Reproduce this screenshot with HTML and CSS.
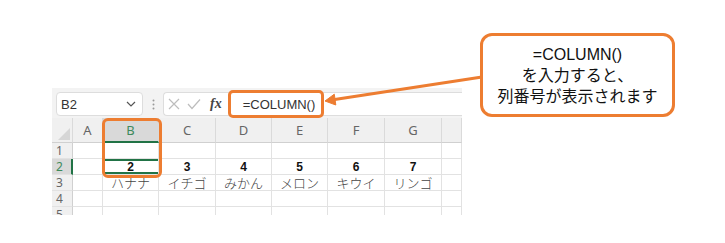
FILE: index.html
```html
<!DOCTYPE html>
<html lang="ja">
<head>
<meta charset="utf-8">
<link rel="stylesheet" href="styles.css">
</head>
<body>
<div class="canvas">
  <div class="sheet">
    <div class="fbar">
      <div class="namebox">
        <span class="ref">B2</span>
        <svg class="chev" width="10" height="6" viewBox="0 0 10 6"><polyline points="1,1 5,5 9,1" fill="none" stroke="#555" stroke-width="1.2"/></svg>
      </div>
      <div class="grip">
        <svg width="3" height="11" viewBox="0 0 3 11"><circle cx="1.5" cy="1.5" r="1" fill="#999"/><circle cx="1.5" cy="5.5" r="1" fill="#999"/><circle cx="1.5" cy="9.5" r="1" fill="#999"/></svg>
      </div>
      <div class="fbox">
        <svg class="ico" width="12" height="12" viewBox="0 0 12 12"><path d="M1 1 L11 11 M11 1 L1 11" stroke="#bdbdbd" stroke-width="1.2" fill="none"/></svg>
        <svg class="ico" width="14" height="12" viewBox="0 0 14 12"><polyline points="1,6 5,10.5 13,1.5" stroke="#bdbdbd" stroke-width="1.2" fill="none"/></svg>
        <span class="fx">fx</span>
        <span class="formula">=COLUMN()</span>
      </div>
    </div>
    <div class="grid">
      <div class="c h corner"><span class="tri"></span></div>
      <div class="c h">A</div>
      <div class="c h sel">B</div>
      <div class="c h">C</div>
      <div class="c h">D</div>
      <div class="c h">E</div>
      <div class="c h">F</div>
      <div class="c h">G</div>
      <div class="c h"></div>

      <div class="c r">1</div>
      <div class="c"></div><div class="c"></div><div class="c"></div><div class="c"></div><div class="c"></div><div class="c"></div><div class="c"></div><div class="c"></div>

      <div class="c r sel">2</div>
      <div class="c"></div>
      <div class="c num active">2</div>
      <div class="c num">3</div>
      <div class="c num">4</div>
      <div class="c num">5</div>
      <div class="c num">6</div>
      <div class="c num">7</div>
      <div class="c"></div>

      <div class="c r">3</div>
      <div class="c"></div>
      <div class="c jp">ハナナ</div>
      <div class="c jp">イチゴ</div>
      <div class="c jp">みかん</div>
      <div class="c jp">メロン</div>
      <div class="c jp">キウイ</div>
      <div class="c jp">リンゴ</div>
      <div class="c"></div>

      <div class="c r">4</div>
      <div class="c"></div><div class="c"></div><div class="c"></div><div class="c"></div><div class="c"></div><div class="c"></div><div class="c"></div><div class="c"></div>

      <div class="c r">5</div>
      <div class="c"></div><div class="c"></div><div class="c"></div><div class="c"></div><div class="c"></div><div class="c"></div><div class="c"></div><div class="c"></div>
    </div>
  </div>

  <div class="hl hl-col"></div>
  <div class="hl hl-formula"></div>

  <svg class="arrow" width="725" height="243" viewBox="0 0 725 243">
    <line x1="482" y1="77" x2="333" y2="99.8" stroke="#ed7d31" stroke-width="3"/>
    <polygon points="325,101 335.8,105 334.3,94.2" fill="#ed7d31" stroke="#ed7d31" stroke-width="1" stroke-linejoin="miter"/>
  </svg>

  <div class="callout">
    <div>=COLUMN()</div>
    <div>を入力すると、</div>
    <div>列番号が表示されます</div>
  </div>
</div>
</body>
</html>
```

FILE: styles.css
```css
html, body {
  margin: 0;
  padding: 0;
  background: #ffffff;
}

body {
  font-family: "Liberation Sans", "Noto Sans CJK JP", sans-serif;
}

.canvas {
  position: relative;
  width: 725px;
  height: 243px;
  overflow: hidden;
}

.sheet {
  margin: 88px 0 0 52px;
  width: 410px;
  height: 127px;
  overflow: hidden;
}

.fbar {
  display: flex;
  align-items: flex-start;
  height: 30px;
  box-sizing: border-box;
  padding: 4px 0 0 4px;
  background: #f3f3f3;
}

.namebox {
  width: 87px;
  height: 24px;
  box-sizing: border-box;
  background: #ffffff;
  border: 1px solid #dddddd;
  border-radius: 4px;
  display: flex;
  align-items: center;
  justify-content: space-between;
  padding: 0 6px 0 4px;
}

.ref {
  font-size: 13px;
  color: #333333;
}

.grip {
  width: 20px;
  height: 24px;
  display: flex;
  align-items: center;
  justify-content: center;
}

.fbox {
  flex: 1;
  height: 24px;
  box-sizing: border-box;
  background: #ffffff;
  border: 1px solid #dddddd;
  border-right: none;
  border-radius: 4px 0 0 4px;
  display: flex;
  align-items: center;
  padding-left: 4px;
  gap: 7px;
}

.fx {
  font-family: "Liberation Serif", "DejaVu Serif", serif;
  font-style: italic;
  font-weight: bold;
  font-size: 14px;
  color: #444444;
  margin-left: 2px;
}

.formula {
  font-size: 13px;
  color: #333333;
  margin-left: 14px;
}

.grid {
  display: grid;
  grid-template-columns: 21px 30px 56px 57px 56px 56px 57px 57px 20px;
  grid-template-rows: 25px repeat(5, 16px);
}

.c {
  box-sizing: border-box;
  border-right: 1px solid #e2e2e2;
  border-bottom: 1px solid #e2e2e2;
  display: flex;
  align-items: center;
  justify-content: center;
  font-size: 12px;
  color: #222222;
  white-space: nowrap;
}

.h {
  background: #f0f0f0;
  color: #666666;
  font-family: "Noto Sans", "Liberation Sans", sans-serif;
  font-size: 13px;
  border-right-color: #dadada;
  border-bottom-color: #d0d0d0;
}

.corner {
  position: relative;
}

.tri {
  position: absolute;
  right: 2px;
  bottom: 2px;
  width: 0;
  height: 0;
  border-left: 12px solid transparent;
  border-bottom: 12px solid #d6d6d6;
}

.h.sel {
  background: #d9d9d9;
  color: #3f8a5c;
  border-bottom: 2px solid #217346;
}

.r {
  background: #f0f0f0;
  color: #666666;
  font-family: "Noto Sans", "Liberation Sans", sans-serif;
  font-size: 12px;
  justify-content: flex-start;
  padding-left: 4px;
  border-right-color: #d0d0d0;
  border-bottom-color: #e2e2e2;
}

.r.sel {
  background: #d9d9d9;
  color: #3f8a5c;
  border-right: 2px solid #217346;
}

.num {
  font-weight: bold;
  font-size: 12px;
  color: #111111;
}

.active {
  box-shadow: inset 0 2px 0 #217346, inset 0 -2px 0 #217346;
}

.jp {
  font-family: "Noto Sans CJK JP", sans-serif;
  font-size: 13px;
  font-weight: 300;
  color: #444444;
  line-height: 15px;
  overflow: visible;
}

.hl {
  position: absolute;
  box-sizing: border-box;
  border: 3px solid #ed7d31;
}

.hl-col {
  left: 102px;
  top: 118px;
  width: 60px;
  height: 60px;
  border-radius: 6px;
}

.hl-formula {
  left: 228px;
  top: 90px;
  width: 96px;
  height: 28px;
  border-radius: 5px;
}

.arrow {
  position: absolute;
  left: 0;
  top: 0;
}

.callout {
  position: absolute;
  left: 480px;
  top: 33px;
  width: 195px;
  height: 84px;
  box-sizing: border-box;
  border: 3px solid #ed7d31;
  border-radius: 12px;
  background: #ffffff;
  display: flex;
  flex-direction: column;
  align-items: center;
  justify-content: center;
  font-size: 16px;
  line-height: 21px;
  color: #111111;
}
```
